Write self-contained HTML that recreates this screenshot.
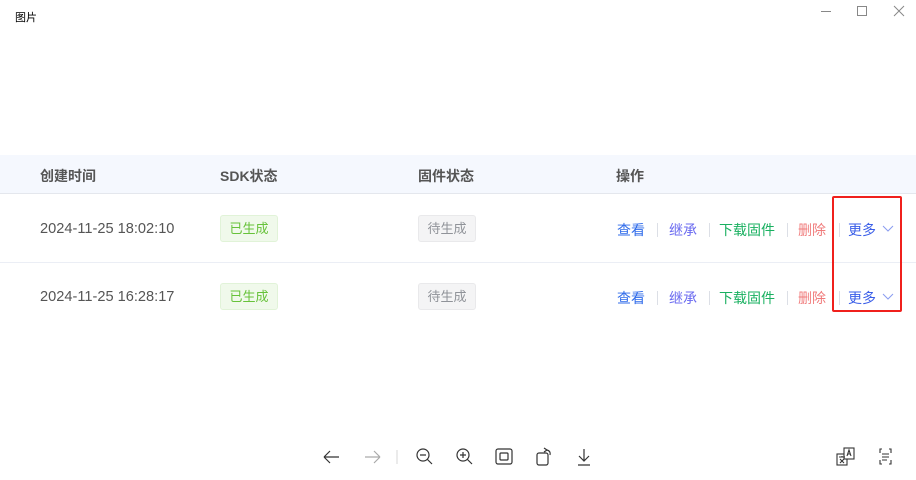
<!DOCTYPE html>
<html><head><meta charset="utf-8"><style>
*{margin:0;padding:0;box-sizing:border-box}
body{width:916px;height:480px;background:#fff;position:relative;overflow:hidden;font-family:"Liberation Sans","Noto Sans CJK SC",sans-serif}
.a{position:absolute;white-space:nowrap}
.h{font-size:14px;font-weight:bold;color:#555;top:166px}
.t{font-size:14.6px;color:#555}
.tag{position:absolute;width:58px;height:27px;border-radius:3px;font-size:13px;text-align:center;line-height:25px}
.g{background:#f0f9eb;border:1px solid #e1f3d8;color:#67c23a}
.n{background:#f4f4f5;border:1px solid #e9e9eb;color:#909399}
.ac{font-size:14px}
.sep{position:absolute;width:1px;height:14px;background:#dcdfe6}
svg{position:absolute}
</style></head><body>
<div class="a" style="left:15px;top:9px;font-size:11px;color:#000">图片</div>
<div class="a" style="left:821px;top:11px;width:10px;height:1px;background:#888"></div>
<div class="a" style="left:857px;top:6px;width:10px;height:10px;border:1px solid #888"></div>
<svg style="left:893px;top:5px" width="12" height="12"><path d="M1 1L11 11M11 1L1 11" stroke="#888" stroke-width="1"/></svg>

<div class="a" style="left:0;top:155px;width:916px;height:39px;background:#f5f8fe;border-bottom:1px solid #e4e7ed"></div>
<div class="a h" style="left:40px">创建时间</div>
<div class="a h" style="left:220px">SDK状态</div>
<div class="a h" style="left:418px">固件状态</div>
<div class="a h" style="left:616px">操作</div>
<div class="a" style="left:0;top:262px;width:916px;height:1px;background:#ebeef5"></div>

<div class="a t" style="left:40px;top:221px">2024-11-25 18:02:10</div>
<div class="tag g" style="left:220px;top:215px">已生成</div>
<div class="tag n" style="left:418px;top:215px">待生成</div>
<div class="a t" style="left:40px;top:289px">2024-11-25 16:28:17</div>
<div class="tag g" style="left:220px;top:283px">已生成</div>
<div class="tag n" style="left:418px;top:283px">待生成</div>

<div class="a" style="left:0;top:220px;width:916px">
<span class="a ac" style="left:617px;color:#2f6bea">查看</span><span class="sep" style="left:657px;top:3px"></span>
<span class="a ac" style="left:669px;color:#6b6bf0">继承</span><span class="sep" style="left:709px;top:3px"></span>
<span class="a ac" style="left:719px;color:#19b060">下载固件</span><span class="sep" style="left:787px;top:3px"></span>
<span class="a ac" style="left:798px;color:#f07b7b">删除</span><span class="sep" style="left:839px;top:3px"></span>
<span class="a ac" style="left:848px;color:#3a5ee8">更多</span>
<svg style="left:882px;top:5px" width="12" height="8"><path d="M1 1L6 6L11 1" stroke="#8a9cf0" fill="none"/></svg>
</div>
<div class="a" style="left:0;top:288px;width:916px">
<span class="a ac" style="left:617px;color:#2f6bea">查看</span><span class="sep" style="left:657px;top:3px"></span>
<span class="a ac" style="left:669px;color:#6b6bf0">继承</span><span class="sep" style="left:709px;top:3px"></span>
<span class="a ac" style="left:719px;color:#19b060">下载固件</span><span class="sep" style="left:787px;top:3px"></span>
<span class="a ac" style="left:798px;color:#f07b7b">删除</span><span class="sep" style="left:839px;top:3px"></span>
<span class="a ac" style="left:848px;color:#3a5ee8">更多</span>
<svg style="left:882px;top:5px" width="12" height="8"><path d="M1 1L6 6L11 1" stroke="#8a9cf0" fill="none"/></svg>
</div>
<div class="a" style="left:832px;top:196px;width:70px;height:116px;border:2px solid #f0201c;border-radius:2px"></div>

<svg style="left:320px;top:446px" width="280" height="22" fill="none" stroke="#333" stroke-width="1.2">
<path d="M4 11H19M4 11L10 5M4 11L10 17"/>
<path d="M45 11H60M60 11L54 5M60 11L54 17" stroke="#aaa"/>
<path d="M77 4V18" stroke="#ddd"/>
<circle cx="103" cy="9" r="6"/><path d="M107 13L112 18M100 9H106"/>
<circle cx="143" cy="9" r="6"/><path d="M147 13L152 18M140 9H146M143 6V12"/>
<rect x="176" y="3" width="16" height="15" rx="2"/><rect x="180" y="7" width="8" height="7" rx="1"/>
<rect x="217" y="7" width="11" height="12" rx="2"/><path d="M224 2L227 4L224 6M227 4Q231 5 230 9"/>
<path d="M264 3V15M259 10L264 15L269 10M258 19H270"/>
</svg>
<svg style="left:835px;top:446px" width="60" height="22" fill="none" stroke="#333" stroke-width="1.1">
<rect x="2" y="8" width="10" height="11"/><rect x="9" y="2" width="10" height="11" fill="#fff"/>
<path d="M12 10L14 4L16 10M13 8H15M4 11H10M7 10V11M5 13L9 17M9 13L5 17"/>
<path d="M47 3H45V7M45 14V18H47M54 3H56V7M56 14V18H54M47 8H54M47 11H54M47 14H52"/>
</svg>
</body></html>
